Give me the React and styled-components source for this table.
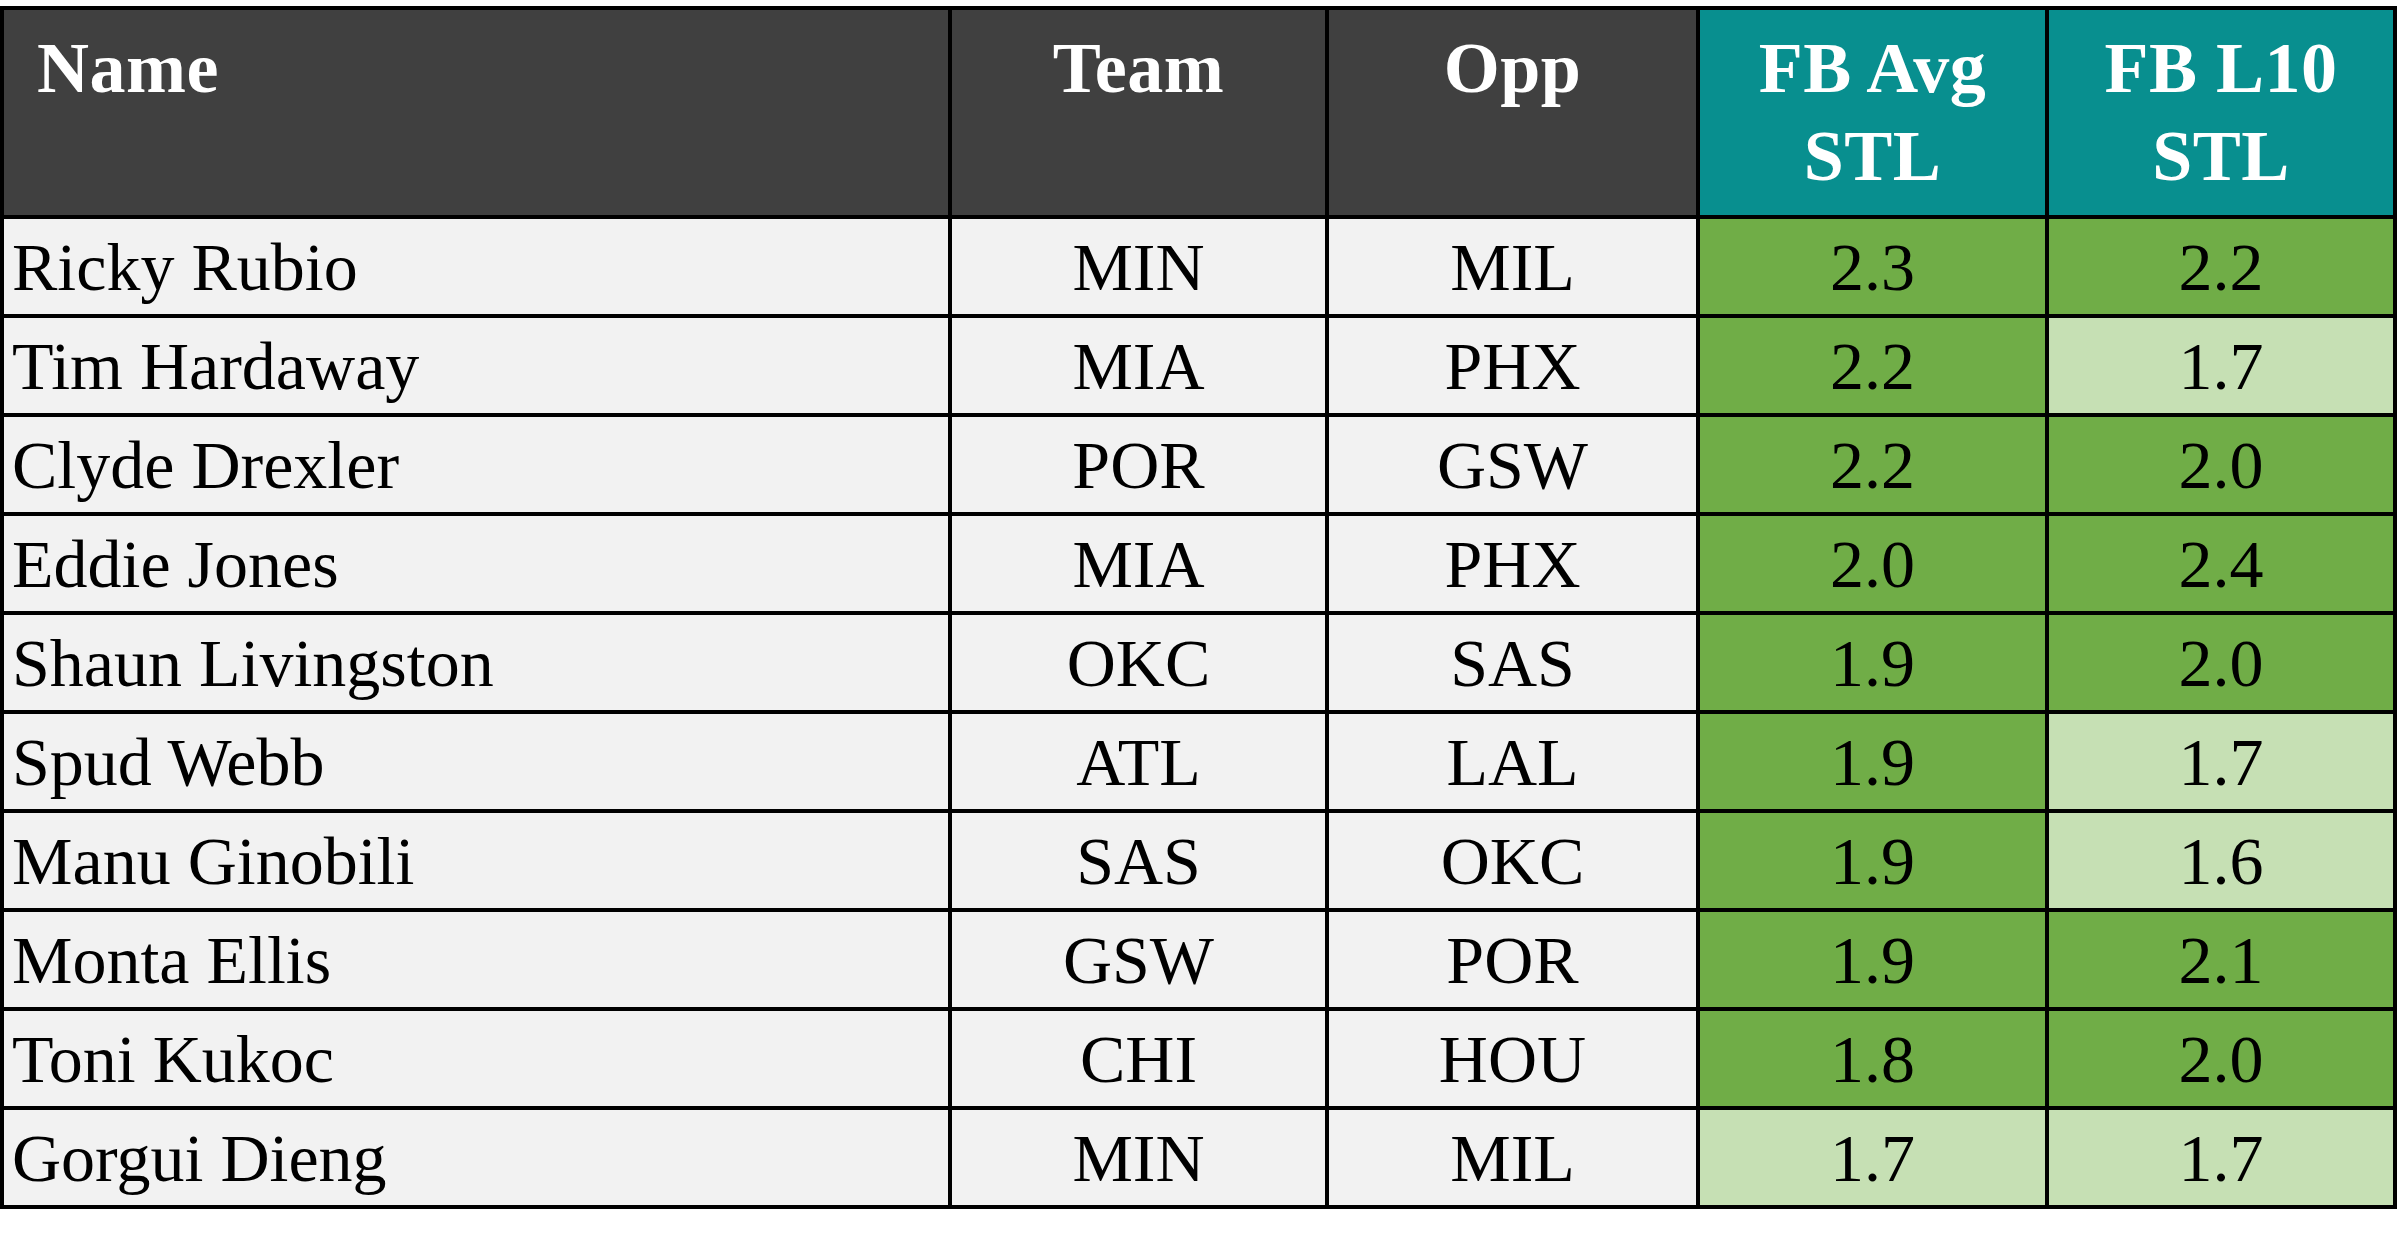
import React from "react";
import styled, { createGlobalStyle } from "styled-components";

const GlobalStyle = createGlobalStyle`
  body {
    margin: 0;
    background: #ffffff;
    font-family: "Liberation Serif", "Times New Roman", serif;
  }
`;

const Table = styled.div`
  display: grid;
  grid-template-columns: 944px 373px 367px 345px 344px;
  grid-template-rows: 205px repeat(10, 95px);
  gap: 4px;
  padding: 4px;
  margin-top: 6px;
  width: max-content;
  background-color: #000;
`;

const HeadCell = styled.div`
  padding: 14px 0 0 ${({ $left }) => ($left ? "33px" : "0")};
  background-color: ${({ $accent }) => ($accent ? "#088f8f" : "#404040")};
  color: #fff;
  font-size: 72px;
  font-weight: 700;
  letter-spacing: 0.5px;
  line-height: 88px;
  text-align: ${({ $left }) => ($left ? "left" : "center")};
`;

const Cell = styled.div`
  display: flex;
  align-items: center;
  justify-content: ${({ $left }) => ($left ? "flex-start" : "center")};
  padding-left: ${({ $left }) => ($left ? "8px" : "0")};
  padding-top: 2px;
  background-color: ${({ $tone }) =>
    $tone === "high" ? "#70ad47" : $tone === "low" ? "#c6e0b4" : "#f2f2f2"};
  color: #000;
  font-size: 68px;
`;

const players = [
  ["Ricky Rubio", "MIN", "MIL", 2.3, 2.2],
  ["Tim Hardaway", "MIA", "PHX", 2.2, 1.7],
  ["Clyde Drexler", "POR", "GSW", 2.2, 2.0],
  ["Eddie Jones", "MIA", "PHX", 2.0, 2.4],
  ["Shaun Livingston", "OKC", "SAS", 1.9, 2.0],
  ["Spud Webb", "ATL", "LAL", 1.9, 1.7],
  ["Manu Ginobili", "SAS", "OKC", 1.9, 1.6],
  ["Monta Ellis", "GSW", "POR", 1.9, 2.1],
  ["Toni Kukoc", "CHI", "HOU", 1.8, 2.0],
  ["Gorgui Dieng", "MIN", "MIL", 1.7, 1.7],
];

const tone = (v) => (v >= 1.8 ? "high" : "low");

const App = () => {
  return (
    <>
      <GlobalStyle />
      <Table>
        <HeadCell $left>Name</HeadCell>
        <HeadCell>Team</HeadCell>
        <HeadCell>Opp</HeadCell>
        <HeadCell $accent>
          FB Avg
          <br />
          STL
        </HeadCell>
        <HeadCell $accent>
          FB L10
          <br />
          STL
        </HeadCell>
        {players.map(([name, team, opp, avg, l10]) => (
          <React.Fragment key={name}>
            <Cell $left>{name}</Cell>
            <Cell>{team}</Cell>
            <Cell>{opp}</Cell>
            <Cell $tone={tone(avg)}>{avg.toFixed(1)}</Cell>
            <Cell $tone={tone(l10)}>{l10.toFixed(1)}</Cell>
          </React.Fragment>
        ))}
      </Table>
    </>
  );
};

export default App;
